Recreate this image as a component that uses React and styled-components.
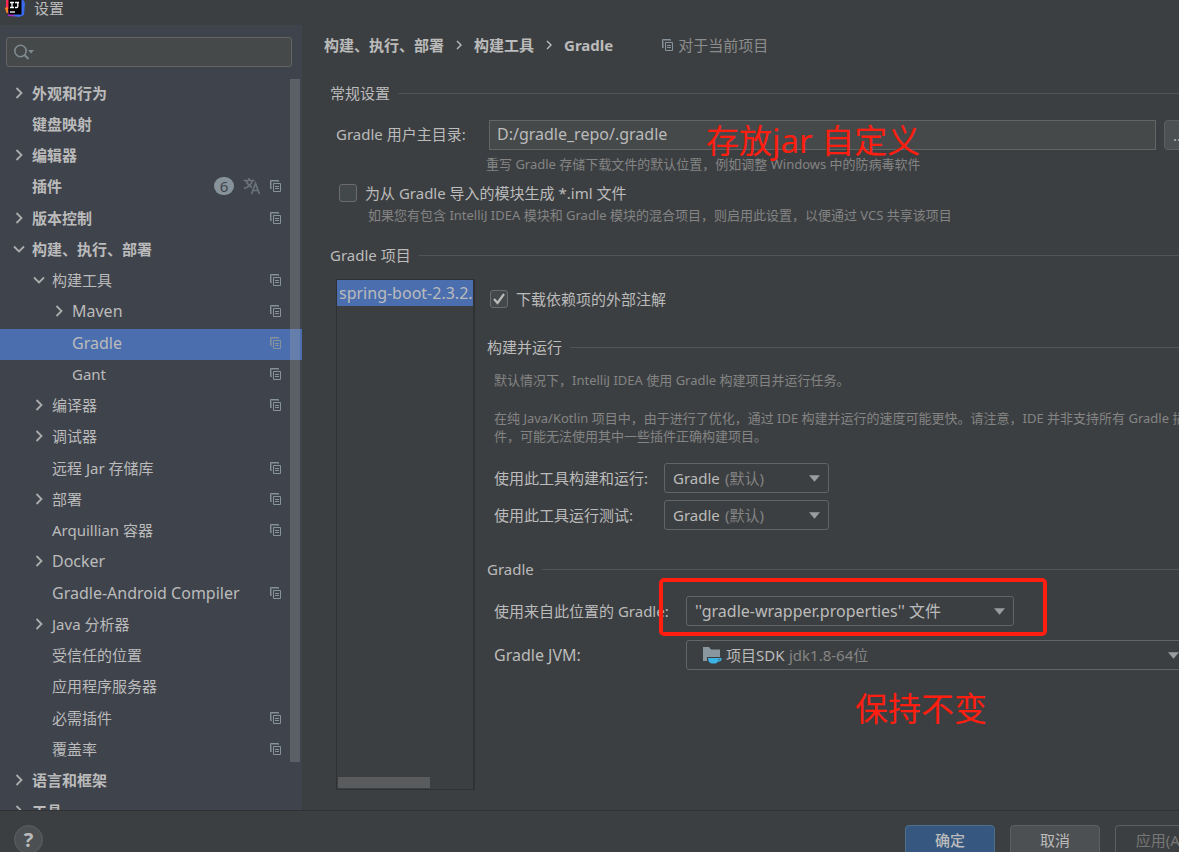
import React, { useState } from 'react';
import styled, { createGlobalStyle, css } from 'styled-components';

const GlobalStyle = createGlobalStyle`
  *, *::before, *::after { box-sizing: border-box; }
  body {
    margin: 0;
    overflow: hidden;
    background: #3c3f41;
    color: #bbbbbb;
    font-family: "Noto Sans", "Noto Sans CJK SC", sans-serif;
    font-size: 15px;
    line-height: 20px;
  }
  button, input, select { font: inherit; color: inherit; margin: 0; }
`;

const Dialog = styled.div`
  display: flex;
  flex-direction: column;
  height: 100vh;
  overflow: hidden;
  white-space: nowrap;
`;

const TitleBar = styled.header`
  display: flex;
  align-items: flex-start;
  gap: 9px;
  height: 25px;
  flex: none;
  padding-left: 5px;
  h1 { margin: 0; font-size: 15px; line-height: 16px; font-weight: 400; }
`;

const Main = styled.div`
  display: flex;
  flex: 1;
  min-height: 0;
`;

const Sidebar = styled.aside`
  display: flex;
  flex-direction: column;
  flex: none;
  width: 302px;
  background: #3f434c;
  overflow: hidden;
`;

const SearchBox = styled.label`
  display: flex;
  align-items: center;
  height: 30px;
  flex: none;
  margin: 12px 10px 12px 6px;
  padding-left: 6px;
  background: #45494a;
  border: 1px solid #646464;
  border-radius: 3px;
  input { flex: 1; min-width: 0; border: 0; outline: 0; background: none; }
`;

const TreeArea = styled.div`
  position: relative;
  flex: 1;
  min-height: 0;
  overflow: hidden;
`;

const Tree = styled.ul`
  display: flex;
  flex-direction: column;
  height: 750px;
  margin: 0;
  padding: 0;
  list-style: none;
`;

const ScrollThumb = styled.div`
  position: absolute;
  top: 0;
  right: 2px;
  width: 10px;
  height: 683px;
  background: rgba(166, 166, 166, 0.29);
`;

const TreeRow = styled.li`
  display: flex;
  align-items: center;
  flex: 1;
  gap: 5px;
  padding: 0 21px 4px ${(p) => 11 + p.$depth * 20}px;
  font-size: ${(p) => (p.$latin ? 16 : 15)}px;
  font-weight: ${(p) => (p.$depth === 0 ? 700 : 400)};
  background: ${(p) => (p.$selected ? '#4b6eaf' : 'transparent')};
`;

const TreeLabel = styled.span`
  flex: 1;
`;

const RowIcons = styled.span`
  display: flex;
  align-items: center;
  gap: 9px;
`;

const CountBadge = styled.span`
  min-width: 20px;
  height: 18px;
  border-radius: 9px;
  background: #87939a;
  color: #3f434c;
  font-weight: 400;
  line-height: 19px;
  text-align: center;
`;

const Content = styled.main`
  flex: 1;
  min-width: 0;
  overflow: hidden;
`;

const ContentInner = styled.div`
  width: calc(100% + 17px);
  padding: 9px 0 0 22px;
`;

const Breadcrumbs = styled.nav`
  display: flex;
  align-items: center;
  height: 22px;
  gap: 11px;
  font-weight: 700;
  a { color: inherit; text-decoration: none; }
`;

const ScopeNote = styled.span`
  display: flex;
  align-items: center;
  gap: 5px;
  margin-left: 38px;
  font-weight: 400;
  color: #8c8c8c;
`;

const SectionTitle = styled.h2`
  display: flex;
  align-items: center;
  gap: 8px;
  height: 20px;
  margin: 0;
  font-size: 15px;
  font-weight: 400;
  &::after { content: ''; flex: 1; height: 1px; background: #515355; }
`;

const General = styled.section`
  padding: 27px 0 0 6px;
`;

const HomeRow = styled.div`
  display: grid;
  grid-template-columns: 153px 1fr 32px;
  align-items: center;
  margin-top: 17px;
  padding-left: 6px;
  > label { padding-bottom: 2px; }
`;

const HomeField = styled.div`
  position: relative;
  display: flex;
  margin-right: 8px;
`;

const TextInput = styled.input`
  width: 100%;
  height: 30px;
  padding: 0 7px 2px;
  font-size: 16px;
  background: #45494a;
  border: 1px solid #646464;
  border-radius: 0;
`;

const Annotation = styled.span`
  color: #ff1e10;
  font-size: 33px;
  line-height: 40px;
  pointer-events: none;
`;

const HomeAnnotation = styled(Annotation)`
  position: absolute;
  left: 217px;
  top: 1px;
`;

const BrowseButton = styled.button`
  height: 30px;
  padding: 0 8px;
  text-align: left;
  background: #4c5052;
  border: 1px solid #5e6060;
  border-radius: 4px;
`;

const Hint = styled.p`
  margin: 0;
  font-size: 13px;
  line-height: 18px;
  color: #848484;
  ${(p) => p.$wrap && css`white-space: normal;`}
  & + & { margin-top: 20px; }
`;

const HomeHint = styled(Hint)`
  padding: 5px 0 0 156px;
`;

const CheckLabel = styled.label`
  display: flex;
  align-items: center;
  gap: 8px;
  height: 20px;
`;

const CheckInput = styled.input`
  appearance: none;
  flex: none;
  width: 18px;
  height: 18px;
  background: #43494a;
  border: 1px solid #6b6b6b;
  border-radius: 3px;
`;

const CheckBox = styled.span`
  display: grid;
  > * { grid-area: 1 / 1; }
  svg { pointer-events: none; visibility: hidden; }
  input:checked + svg { visibility: visible; }
`;

const ImlBlock = styled.div`
  padding: 10px 0 0 9px;
  ${Hint} { padding: 3px 0 0 29px; }
`;

const Projects = styled.section`
  padding: 21px 0 0 6px;
`;

const ProjectSplit = styled.div`
  display: flex;
  gap: 12px;
  padding: 14px 0 0 6px;
`;

const ProjectPanel = styled.div`
  display: flex;
  flex-direction: column;
  justify-content: space-between;
  flex: none;
  width: 139px;
  height: 511px;
  border: 1px solid #2f3132;
  border-width: 1px 2px 1px 1px;
`;

const ProjectItem = styled.button`
  height: 26px;
  padding: 0 0 0 2px;
  overflow: hidden;
  border: 0;
  font-size: 16px;
  text-align: left;
  white-space: nowrap;
  background: #4b6eaf;
`;

const HorizontalThumb = styled.div`
  width: 92px;
  height: 11px;
  margin: 0 0 1px 1px;
  background: #595b5d;
`;

const ProjectSettings = styled.div`
  flex: 1;
  min-width: 0;
  padding-top: 10px;
`;

const DownloadRow = styled.div`
  padding: 0 0 28px 3px;
`;

const SettingsBody = styled.div`
  padding: ${(p) => p.$top}px 0 ${(p) => p.$bottom || 0}px 7px;
`;

const FormGrid = styled.div`
  display: grid;
  grid-template-columns: ${(p) => p.$label}px 1fr;
  align-items: center;
  row-gap: ${(p) => p.$gap}px;
`;

const LatinLabel = styled.label`
  font-size: 16px;
`;

const Select = styled.span`
  display: grid;
  align-items: center;
  width: ${(p) => p.$width};
  > * { grid-area: 1 / 1; }
  > svg { justify-self: end; margin-right: 9px; pointer-events: none; }
  select {
    appearance: none;
    width: 100%;
    height: 30px;
    padding: 0 28px 0 ${(p) => p.$inset || 8}px;
    background: transparent;
    border: 1px solid #646464;
    border-radius: 3px;
    font-size: ${(p) => (p.$latin ? 16 : 15)}px;
  }
  option { background: #3c3f41; }
`;

const SelectNote = styled.span`
  padding-left: ${(p) => p.$inset}px;
  color: #848484;
  pointer-events: none;
`;

const SdkIcon = styled.span`
  display: flex;
  padding-left: 16px;
  pointer-events: none;
`;

const WrapperField = styled.div`
  position: relative;
`;

const HighlightFrame = styled.div`
  position: absolute;
  left: -27px;
  top: -18px;
  width: 388px;
  height: 58px;
  border: 4px solid #ff1e10;
  border-radius: 5px;
  pointer-events: none;
`;

const KeepNote = styled.p`
  margin: 19px 0 0 361px;
  line-height: 40px;
`;

const Footer = styled.footer`
  display: flex;
  justify-content: space-between;
  align-items: flex-start;
  flex: none;
  height: 42px;
  padding: 14px 0 0 14px;
  border-top: 1px solid #323232;
  overflow: hidden;
`;

const HelpButton = styled.button`
  flex: none;
  width: 29px;
  height: 29px;
  padding: 0;
  border: 1px solid #5e6060;
  border-radius: 50%;
  background: #4c5052;
  font-size: 20px;
  font-weight: 700;
  line-height: 26px;
`;

const Actions = styled.div`
  display: flex;
  gap: 15px;
  margin-right: -26px;
`;

const ActionButton = styled.button`
  width: 90px;
  height: 30px;
  padding: 0;
  border-radius: 4px;
  border: 1px solid #5e6060;
  background: #4c5052;
  ${(p) => p.$primary && css`background: #365880; border-color: #4c708c; font-weight: 500;`}
  &:disabled { background: transparent; color: #777777; }
`;

const Arrow = ({ open }) => (
  <svg width="16" height="16" viewBox="0 0 16 16" fill="none" stroke="#adadad" strokeWidth="1.8" aria-hidden="true">
    {open ? <path d="M3 5.5l5 5 5-5" /> : <path d="M5.5 3l5 5-5 5" />}
  </svg>
);

const CrumbArrow = () => (
  <svg width="8" height="12" viewBox="0 0 8 12" fill="none" stroke="#bbbbbb" strokeWidth="1.4" aria-hidden="true">
    <path d="M2 2l4 4-4 4" />
  </svg>
);

const CopyIcon = () => (
  <svg width="11" height="12" viewBox="0 0 11 12" fill="none" stroke="#87939a" aria-hidden="true">
    <path d="M1.700 8.500H.5V.5h8v1.200" />
    <path d="M1.500 8.500v-7h7" strokeOpacity="0.45" />
    <path d="M3.500 3.500h7v8h-7z" />
    <path d="M5 6.500h4M5 8.500h4" />
  </svg>
);

const TranslateIcon = () => (
  <svg width="18" height="18" viewBox="0 0 18 18" fill="none" stroke="#6a737b" strokeWidth="1.7" aria-hidden="true">
    <path d="M0.5 3.5h11M6 1v2.5M3 3.5c1 3 3.5 5.5 6 7M9.5 3.5c-1 3.5-4 6.5-8.5 8" />
    <path d="M8.5 17l4-10.500 4 10.500M10 13.500h5" />
  </svg>
);

const SearchIcon = () => (
  <svg width="22" height="18" viewBox="0 0 22 18" fill="none" stroke="#7f8b91" strokeWidth="1.6" aria-hidden="true">
    <circle cx="7.5" cy="8" r="5.7" />
    <path d="M11.500 12l4 4" strokeWidth="2" />
    <path d="M15 7h6l-3 3.500z" fill="#7f8b91" stroke="none" />
  </svg>
);

const DownTriangle = () => (
  <svg width="11" height="8" viewBox="0 0 11 8" fill="#9a9da0" aria-hidden="true">
    <path d="M0 1.200h11L5.500 7.700z" />
  </svg>
);

const Logo = () => (
  <svg width="20" height="17" viewBox="0 0 20 17" aria-hidden="true">
    <path d="M1 0h9v9H0l1-3z" fill="#fe2857" />
    <path d="M0 8l3-1v6H1.500z" fill="#fc801d" />
    <path d="M3 11v5l8 .5v-6z" fill="#a930c4" />
    <path d="M9 0h9l2 3-1 12-5 2-5-1z" fill="#3a6cf0" />
    <rect x="3.5" y="0" width="13" height="14.5" fill="#000" />
    <path d="M5 2.500h4M7 2.500v5M5 7.500h4M10 2.500h4M12.800 2.500v4q0 1-1.200 1h-1.600" stroke="#fff" strokeWidth="1.3" fill="none" />
    <path d="M5 12h5" stroke="#fff" strokeWidth="1.3" />
  </svg>
);

const FolderCup = () => (
  <svg width="20" height="20" viewBox="0 0 20 20" aria-hidden="true">
    <path d="M1 2h6l2 2.500h9V12H5v4H1z" fill="#8a979f" />
    <path d="M6 13h13.500v1c0 2-1.500 2.800-3.500 2.500-1 1.500-2 2-3.500 2h-2C7.500 18.500 6 16 6 13z" fill="#3bb3e4" />
    <path d="M16.500 14.300h1.600q0 1-1.600 1z" fill="#3c3f41" />
  </svg>
);

const TREE = [
  { label: '外观和行为', depth: 0, state: 'closed' },
  { label: '键盘映射', depth: 0 },
  { label: '编辑器', depth: 0, state: 'closed' },
  { label: '插件', depth: 0, copy: true, count: 6 },
  { label: '版本控制', depth: 0, state: 'closed', copy: true },
  { label: '构建、执行、部署', depth: 0, state: 'open' },
  { label: '构建工具', depth: 1, state: 'open', copy: true },
  { label: 'Maven', depth: 2, state: 'closed', copy: true, latin: true },
  { label: 'Gradle', depth: 2, copy: true, selected: true, latin: true },
  { label: 'Gant', depth: 2, copy: true },
  { label: '编译器', depth: 1, state: 'closed', copy: true },
  { label: '调试器', depth: 1, state: 'closed' },
  { label: '远程 Jar 存储库', depth: 1, copy: true },
  { label: '部署', depth: 1, state: 'closed', copy: true },
  { label: 'Arquillian 容器', depth: 1, copy: true },
  { label: 'Docker', depth: 1, state: 'closed', latin: true },
  { label: 'Gradle-Android Compiler', depth: 1, copy: true, latin: true },
  { label: 'Java 分析器', depth: 1, state: 'closed' },
  { label: '受信任的位置', depth: 1 },
  { label: '应用程序服务器', depth: 1 },
  { label: '必需插件', depth: 1, copy: true },
  { label: '覆盖率', depth: 1, copy: true },
  { label: '语言和框架', depth: 0, state: 'closed' },
  { label: '工具', depth: 0, state: 'closed' },
];

const ArrowSlot = styled.span`
  display: flex;
  width: 16px;
`;

function Check({ checked, children }) {
  const [on, setOn] = useState(checked);
  return (
    <CheckLabel>
      <CheckBox>
        <CheckInput type="checkbox" checked={on} onChange={() => setOn(!on)} />
        <svg width="18" height="18" viewBox="0 0 18 18" fill="none" stroke="#bbbbbb" strokeWidth="2.2" aria-hidden="true">
          <path d="M4 9l3.500 4L14 4" />
        </svg>
      </CheckBox>
      {children}
    </CheckLabel>
  );
}

export default function App() {
  return (
    <Dialog>
      <GlobalStyle />
      <TitleBar>
        <Logo />
        <h1>设置</h1>
      </TitleBar>
      <Main>
        <Sidebar>
          <SearchBox>
            <SearchIcon />
            <input type="text" aria-label="搜索" />
          </SearchBox>
          <TreeArea>
            <Tree>
              {TREE.map((row) => (
                <TreeRow key={row.label} $depth={row.depth} $selected={row.selected} $latin={row.latin}>
                  <ArrowSlot>{row.state && <Arrow open={row.state === 'open'} />}</ArrowSlot>
                  <TreeLabel>{row.label}</TreeLabel>
                  <RowIcons>
                    {row.count && <CountBadge>{row.count}</CountBadge>}
                    {row.count && <TranslateIcon />}
                    {row.copy && <CopyIcon />}
                  </RowIcons>
                </TreeRow>
              ))}
            </Tree>
            <ScrollThumb />
          </TreeArea>
        </Sidebar>
        <Content>
          <ContentInner>
            <Breadcrumbs>
              <a href="#build">构建、执行、部署</a>
              <CrumbArrow />
              <a href="#tools">构建工具</a>
              <CrumbArrow />
              <a href="#gradle">Gradle</a>
              <ScopeNote><CopyIcon />对于当前项目</ScopeNote>
            </Breadcrumbs>
            <General>
              <SectionTitle>常规设置</SectionTitle>
              <HomeRow>
                <label htmlFor="home">Gradle 用户主目录:</label>
                <HomeField>
                  <TextInput id="home" type="text" defaultValue="D:/gradle_repo/.gradle" />
                  <HomeAnnotation>存放jar 自定义</HomeAnnotation>
                </HomeField>
                <BrowseButton type="button">...</BrowseButton>
              </HomeRow>
              <HomeHint>重写 Gradle 存储下载文件的默认位置，例如调整 Windows 中的防病毒软件</HomeHint>
              <ImlBlock>
                <Check checked={false}>为从 Gradle 导入的模块生成 *.iml 文件</Check>
                <Hint>如果您有包含 IntelliJ IDEA 模块和 Gradle 模块的混合项目，则启用此设置，以便通过 VCS 共享该项目</Hint>
              </ImlBlock>
            </General>
            <Projects>
              <SectionTitle>Gradle 项目</SectionTitle>
              <ProjectSplit>
                <ProjectPanel>
                  <ProjectItem type="button">spring-boot-2.3.2.</ProjectItem>
                  <HorizontalThumb />
                </ProjectPanel>
                <ProjectSettings>
                  <DownloadRow>
                    <Check checked>下载依赖项的外部注解</Check>
                  </DownloadRow>
                  <SectionTitle>构建并运行</SectionTitle>
                  <SettingsBody $top={14}>
                    <Hint>默认情况下，IntelliJ IDEA 使用 Gradle 构建项目并运行任务。</Hint>
                    <Hint $wrap>
                      在纯 Java/Kotlin 项目中，由于进行了优化，通过 IDE 构建并运行的速度可能更快。请注意，IDE 并非支持所有 Gradle 插件，可能无法使用其中一些插件正确构建项目。
                    </Hint>
                  </SettingsBody>
                  <SettingsBody $top={18} $bottom={29}>
                    <FormGrid $label={170} $gap={7}>
                      <label htmlFor="build">使用此工具构建和运行:</label>
                      <Select $width="165px">
                        <select id="build"><option>Gradle</option></select>
                        <SelectNote $inset={61}>(默认)</SelectNote>
                        <DownTriangle />
                      </Select>
                      <label htmlFor="test">使用此工具运行测试:</label>
                      <Select $width="165px">
                        <select id="test"><option>Gradle</option></select>
                        <SelectNote $inset={61}>(默认)</SelectNote>
                        <DownTriangle />
                      </Select>
                    </FormGrid>
                  </SettingsBody>
                  <SectionTitle>Gradle</SectionTitle>
                  <SettingsBody $top={17}>
                    <FormGrid $label={192} $gap={14}>
                      <label htmlFor="wrapper">使用来自此位置的 Gradle:</label>
                      <WrapperField>
                        <Select $width="328px" $latin>
                          <select id="wrapper"><option>''gradle-wrapper.properties'' 文件</option></select>
                          <DownTriangle />
                        </Select>
                        <HighlightFrame />
                      </WrapperField>
                      <LatinLabel htmlFor="jvm">Gradle JVM:</LatinLabel>
                      <Select $width="calc(100% - 8px)" $inset={39}>
                        <select id="jvm"><option>项目SDK</option></select>
                        <SdkIcon><FolderCup /></SdkIcon>
                        <SelectNote $inset={103}>jdk1.8-64位</SelectNote>
                        <DownTriangle />
                      </Select>
                    </FormGrid>
                    <KeepNote><Annotation>保持不变</Annotation></KeepNote>
                  </SettingsBody>
                </ProjectSettings>
              </ProjectSplit>
            </Projects>
          </ContentInner>
        </Content>
      </Main>
      <Footer>
        <HelpButton type="button" aria-label="帮助">?</HelpButton>
        <Actions>
          <ActionButton type="button" $primary>确定</ActionButton>
          <ActionButton type="button">取消</ActionButton>
          <ActionButton type="button" disabled>应用(A)</ActionButton>
        </Actions>
      </Footer>
    </Dialog>
  );
}
